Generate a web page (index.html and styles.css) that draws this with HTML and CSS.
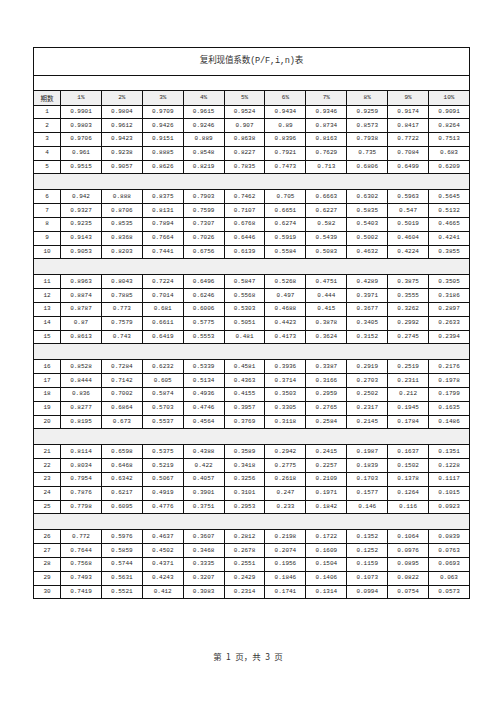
FILE: index.html
```html
<!DOCTYPE html>
<html lang="zh-CN">
<head>
<meta charset="utf-8">
<title>复利现值系数(P/F,i,n)表</title>
<link rel="stylesheet" href="styles.css">
</head>
<body>
<div class="page">
<table class="sheet">
<colgroup><col class="c0"><col class="cv"><col class="cv"><col class="cv"><col class="cv"><col class="cv"><col class="cv"><col class="cv"><col class="cv"><col class="cv"><col class="cv"></colgroup>
<tbody>
<tr class="title-row"><td colspan="11"><span class="title">复利现值系数(P/F,i,n)表</span></td></tr>
<tr class="blank-row"><td colspan="11"></td></tr>
<tr class="head-row"><td class="cjk">期数</td><td>1%</td><td>2%</td><td>3%</td><td>4%</td><td>5%</td><td>6%</td><td>7%</td><td>8%</td><td>9%</td><td>10%</td></tr>
<tr class="data"><td>1</td><td>0.9901</td><td>0.9804</td><td>0.9709</td><td>0.9615</td><td>0.9524</td><td>0.9434</td><td>0.9346</td><td>0.9259</td><td>0.9174</td><td>0.9091</td></tr>
<tr class="data"><td>2</td><td>0.9803</td><td>0.9612</td><td>0.9426</td><td>0.9246</td><td>0.907</td><td>0.89</td><td>0.8734</td><td>0.8573</td><td>0.8417</td><td>0.8264</td></tr>
<tr class="data"><td>3</td><td>0.9706</td><td>0.9423</td><td>0.9151</td><td>0.889</td><td>0.8638</td><td>0.8396</td><td>0.8163</td><td>0.7938</td><td>0.7722</td><td>0.7513</td></tr>
<tr class="data"><td>4</td><td>0.961</td><td>0.9238</td><td>0.8885</td><td>0.8548</td><td>0.8227</td><td>0.7921</td><td>0.7629</td><td>0.735</td><td>0.7084</td><td>0.683</td></tr>
<tr class="data"><td>5</td><td>0.9515</td><td>0.9057</td><td>0.8626</td><td>0.8219</td><td>0.7835</td><td>0.7473</td><td>0.713</td><td>0.6806</td><td>0.6499</td><td>0.6209</td></tr>
<tr class="band"><td colspan="11"></td></tr>
<tr class="data"><td>6</td><td>0.942</td><td>0.888</td><td>0.8375</td><td>0.7903</td><td>0.7462</td><td>0.705</td><td>0.6663</td><td>0.6302</td><td>0.5963</td><td>0.5645</td></tr>
<tr class="data"><td>7</td><td>0.9327</td><td>0.8706</td><td>0.8131</td><td>0.7599</td><td>0.7107</td><td>0.6651</td><td>0.6227</td><td>0.5835</td><td>0.547</td><td>0.5132</td></tr>
<tr class="data"><td>8</td><td>0.9235</td><td>0.8535</td><td>0.7894</td><td>0.7307</td><td>0.6768</td><td>0.6274</td><td>0.582</td><td>0.5403</td><td>0.5019</td><td>0.4665</td></tr>
<tr class="data"><td>9</td><td>0.9143</td><td>0.8368</td><td>0.7664</td><td>0.7026</td><td>0.6446</td><td>0.5919</td><td>0.5439</td><td>0.5002</td><td>0.4604</td><td>0.4241</td></tr>
<tr class="data"><td>10</td><td>0.9053</td><td>0.8203</td><td>0.7441</td><td>0.6756</td><td>0.6139</td><td>0.5584</td><td>0.5083</td><td>0.4632</td><td>0.4224</td><td>0.3855</td></tr>
<tr class="band"><td colspan="11"></td></tr>
<tr class="data"><td>11</td><td>0.8963</td><td>0.8043</td><td>0.7224</td><td>0.6496</td><td>0.5847</td><td>0.5268</td><td>0.4751</td><td>0.4289</td><td>0.3875</td><td>0.3505</td></tr>
<tr class="data"><td>12</td><td>0.8874</td><td>0.7885</td><td>0.7014</td><td>0.6246</td><td>0.5568</td><td>0.497</td><td>0.444</td><td>0.3971</td><td>0.3555</td><td>0.3186</td></tr>
<tr class="data"><td>13</td><td>0.8787</td><td>0.773</td><td>0.681</td><td>0.6006</td><td>0.5303</td><td>0.4688</td><td>0.415</td><td>0.3677</td><td>0.3262</td><td>0.2897</td></tr>
<tr class="data"><td>14</td><td>0.87</td><td>0.7579</td><td>0.6611</td><td>0.5775</td><td>0.5051</td><td>0.4423</td><td>0.3878</td><td>0.3405</td><td>0.2992</td><td>0.2633</td></tr>
<tr class="data"><td>15</td><td>0.8613</td><td>0.743</td><td>0.6419</td><td>0.5553</td><td>0.481</td><td>0.4173</td><td>0.3624</td><td>0.3152</td><td>0.2745</td><td>0.2394</td></tr>
<tr class="band"><td colspan="11"></td></tr>
<tr class="data"><td>16</td><td>0.8528</td><td>0.7284</td><td>0.6232</td><td>0.5339</td><td>0.4581</td><td>0.3936</td><td>0.3387</td><td>0.2919</td><td>0.2519</td><td>0.2176</td></tr>
<tr class="data"><td>17</td><td>0.8444</td><td>0.7142</td><td>0.605</td><td>0.5134</td><td>0.4363</td><td>0.3714</td><td>0.3166</td><td>0.2703</td><td>0.2311</td><td>0.1978</td></tr>
<tr class="data"><td>18</td><td>0.836</td><td>0.7002</td><td>0.5874</td><td>0.4936</td><td>0.4155</td><td>0.3503</td><td>0.2959</td><td>0.2502</td><td>0.212</td><td>0.1799</td></tr>
<tr class="data"><td>19</td><td>0.8277</td><td>0.6864</td><td>0.5703</td><td>0.4746</td><td>0.3957</td><td>0.3305</td><td>0.2765</td><td>0.2317</td><td>0.1945</td><td>0.1635</td></tr>
<tr class="data"><td>20</td><td>0.8195</td><td>0.673</td><td>0.5537</td><td>0.4564</td><td>0.3769</td><td>0.3118</td><td>0.2584</td><td>0.2145</td><td>0.1784</td><td>0.1486</td></tr>
<tr class="band"><td colspan="11"></td></tr>
<tr class="data"><td>21</td><td>0.8114</td><td>0.6598</td><td>0.5375</td><td>0.4388</td><td>0.3589</td><td>0.2942</td><td>0.2415</td><td>0.1987</td><td>0.1637</td><td>0.1351</td></tr>
<tr class="data"><td>22</td><td>0.8034</td><td>0.6468</td><td>0.5219</td><td>0.422</td><td>0.3418</td><td>0.2775</td><td>0.2257</td><td>0.1839</td><td>0.1502</td><td>0.1228</td></tr>
<tr class="data"><td>23</td><td>0.7954</td><td>0.6342</td><td>0.5067</td><td>0.4057</td><td>0.3256</td><td>0.2618</td><td>0.2109</td><td>0.1703</td><td>0.1378</td><td>0.1117</td></tr>
<tr class="data"><td>24</td><td>0.7876</td><td>0.6217</td><td>0.4919</td><td>0.3901</td><td>0.3101</td><td>0.247</td><td>0.1971</td><td>0.1577</td><td>0.1264</td><td>0.1015</td></tr>
<tr class="data"><td>25</td><td>0.7798</td><td>0.6095</td><td>0.4776</td><td>0.3751</td><td>0.2953</td><td>0.233</td><td>0.1842</td><td>0.146</td><td>0.116</td><td>0.0923</td></tr>
<tr class="band"><td colspan="11"></td></tr>
<tr class="data"><td>26</td><td>0.772</td><td>0.5976</td><td>0.4637</td><td>0.3607</td><td>0.2812</td><td>0.2198</td><td>0.1722</td><td>0.1352</td><td>0.1064</td><td>0.0839</td></tr>
<tr class="data"><td>27</td><td>0.7644</td><td>0.5859</td><td>0.4502</td><td>0.3468</td><td>0.2678</td><td>0.2074</td><td>0.1609</td><td>0.1252</td><td>0.0976</td><td>0.0763</td></tr>
<tr class="data"><td>28</td><td>0.7568</td><td>0.5744</td><td>0.4371</td><td>0.3335</td><td>0.2551</td><td>0.1956</td><td>0.1504</td><td>0.1159</td><td>0.0895</td><td>0.0693</td></tr>
<tr class="data"><td>29</td><td>0.7493</td><td>0.5631</td><td>0.4243</td><td>0.3207</td><td>0.2429</td><td>0.1846</td><td>0.1406</td><td>0.1073</td><td>0.0822</td><td>0.063</td></tr>
<tr class="data"><td>30</td><td>0.7419</td><td>0.5521</td><td>0.412</td><td>0.3083</td><td>0.2314</td><td>0.1741</td><td>0.1314</td><td>0.0994</td><td>0.0754</td><td>0.0573</td></tr>
</tbody>
</table>
<div class="footer">第 1 页，共 3 页</div>
</div>
</body>
</html>
```

FILE: styles.css
```css
html, body {
  margin: 0;
  padding: 0;
  background: #ffffff;
}

.page {
  width: 496px;
  height: 702px;
  box-sizing: border-box;
  padding-top: 47px;
  display: flex;
  flex-direction: column;
  font-family: "Liberation Mono", "Noto Sans CJK SC", monospace;
  color: #222;
}

.sheet {
  margin-left: 33px;
  width: 436px;
  table-layout: fixed;
  border-collapse: collapse;
  border: 1px solid #111;
}

.c0 { width: 27px; }
.cv { width: 40.9px; }

.sheet td {
  border: 1px solid #111;
  padding: 0;
  text-align: center;
  vertical-align: middle;
  font-size: 6px;
  line-height: 1;
  color: #2a2a2a;
  white-space: nowrap;
  overflow: hidden;
}

.title-row td {
  height: 27px;
}

.title {
  font-family: "Liberation Mono", "Noto Sans CJK SC", monospace;
  font-size: 8.6px;
  color: #333;
  letter-spacing: -0.2px;
}

.blank-row td {
  height: 14px;
}

.head-row td {
  height: 13.5px;
  background: #f0f0f0;
}

.cjk {
  font-family: "Noto Sans CJK SC", sans-serif;
}

.head-row .cjk {
  font-size: 6.5px;
}

.data td {
  height: 12.8px;
}

.band td {
  height: 15px;
  background: #f0f0f0;
}

.footer {
  margin-top: 51px;
  text-align: center;
  font-family: "Noto Sans CJK SC", sans-serif;
  font-size: 8.5px;
  line-height: 12px;
  color: #333;
  white-space: pre;
  word-spacing: 2.5px;
}
```
